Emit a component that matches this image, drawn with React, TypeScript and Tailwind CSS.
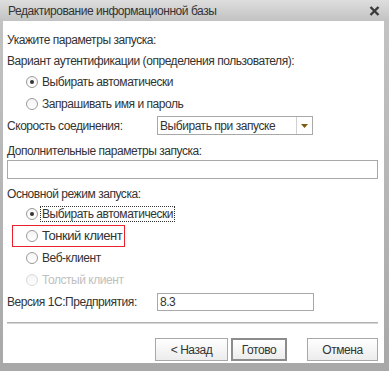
import React from "react";

function Radio({ checked, disabled }: { checked?: boolean; disabled?: boolean }) {
  return (
    <span
      className={
        "relative inline-flex h-[12px] w-[12px] shrink-0 items-center justify-center rounded-full border bg-gradient-to-b from-[#f4f4f4] to-white " +
        (disabled ? "border-[#d8d8d8]" : "border-[#9a9a9a]")
      }
    >
      {checked && <span className="h-[4px] w-[4px] rounded-full bg-[#333]" />}
    </span>
  );
}

function RadioRow({
  label,
  checked,
  disabled,
  focused,
  className = "h-[22px] pl-[19px]",
}: {
  label: string;
  checked?: boolean;
  disabled?: boolean;
  focused?: boolean;
  className?: string;
}) {
  return (
    <div className={"flex shrink-0 items-center gap-[2px] whitespace-nowrap " + className}>
      <Radio checked={checked} disabled={disabled} />
      <span
        className={
          (focused ? "border border-dotted border-[#333] px-px leading-[14px] " : "border border-transparent px-px ") +
          (disabled ? "text-[#c0c0c0]" : "text-[#333]")
        }
      >
        {label}
      </span>
    </div>
  );
}

function Button({ label, primary, w }: { label: string; primary?: boolean; w: string }) {
  return (
    <button
      className={
        "flex h-[23px] items-center justify-center bg-gradient-to-b from-white to-[#ececec] text-[#333] " +
        w +
        (primary ? " border-2 border-[#8c8c8c]" : " border border-[#a8a8a8]")
      }
    >
      {label}
    </button>
  );
}

export default function App() {
  return (
    <div
      className="flex h-[371px] w-[389px] flex-col whitespace-nowrap bg-gradient-to-b from-[#c4c4c4] to-[#a8a8a8] text-[12px] tracking-[-0.45px] text-[#333]"
      style={{ fontFamily: '"Liberation Sans", Arial, sans-serif' }}
    >
      {/* Title bar */}
      <div className="flex h-[21px] shrink-0 items-center justify-between bg-gradient-to-b from-[#dedede] to-[#c2c2c2] pl-[8px] pr-[9px]">
        <span className="text-[#333]">Редактирование информационной базы</span>
        <svg width="11" height="10" viewBox="0 0 11 10">
          <path d="M1.5 1 L9.5 9 M9.5 1 L1.5 9" stroke="#3a3a3a" strokeWidth="2.4" />
        </svg>
      </div>

      {/* Body */}
      <div className="ml-[3px] mr-[5px] flex flex-1 flex-col bg-white px-[4px] pt-[10px]">
        <div className="flex h-[18px] items-center">Укажите параметры запуска:</div>
        <div className="mt-[2px] flex h-[20px] items-center">Вариант аутентификации (определения пользователя):</div>
        <RadioRow label="Выбирать автоматически" checked />
        <RadioRow label="Запрашивать имя и пароль" />

        <div className="flex h-[21px] items-center">
          <span className="w-[150px]">Скорость соединения:</span>
          <div className="flex h-[19px] w-[156px] items-stretch border border-[#a8a8a8]">
            <span className="flex flex-1 items-center pl-[2px]">Выбирать при запуске</span>
            <span className="flex w-[16px] items-center justify-center border-l border-[#d0d0d0]">
              <svg width="7" height="4" viewBox="0 0 7 4">
                <path d="M0 0 H7 L3.5 4 Z" fill="#7b5a12" />
              </svg>
            </span>
          </div>
        </div>

        <div className="mt-[6px] flex h-[18px] items-center">Дополнительные параметры запуска:</div>
        <div className="h-[19px] w-[371px] shrink-0 border border-[#a8a8a8]" />

        <div className="mt-[6px] flex h-[18px] items-center">Основной режим запуска:</div>
        <RadioRow label="Выбирать автоматически" checked focused />
        <RadioRow
          label="Тонкий клиент"
          className="ml-[5px] h-[22px] w-[113px] border border-[#e8212b] pl-[13px] text-[13px]"
        />
        <RadioRow label="Веб-клиент" />
        <RadioRow label="Толстый клиент" disabled />

        <div className="mt-[1px] flex h-[20px] shrink-0 items-center">
          <span className="w-[150px]">Версия 1С:Предприятия:</span>
          <div className="flex h-[18px] w-[157px] items-center border border-[#a8a8a8] pl-[2px]">8.3</div>
        </div>

        {/* Separator */}
        <div className="flex h-[21px] shrink-0 items-center">
          <div className="h-[2px] w-[371px] bg-gradient-to-b from-[#a0a0a0] to-[#e8e8e8]" />
        </div>

        <div className="mt-[5px] flex shrink-0 justify-end pr-[2px]">
          <Button label="< Назад" w="w-[73px]" />
          <div className="w-[3px]" />
          <Button label="Готово" primary w="w-[56px]" />
          <div className="w-[20px]" />
          <Button label="Отмена" w="w-[71px]" />
        </div>
      </div>
      <div className="h-[8px] shrink-0" />
    </div>
  );
}
